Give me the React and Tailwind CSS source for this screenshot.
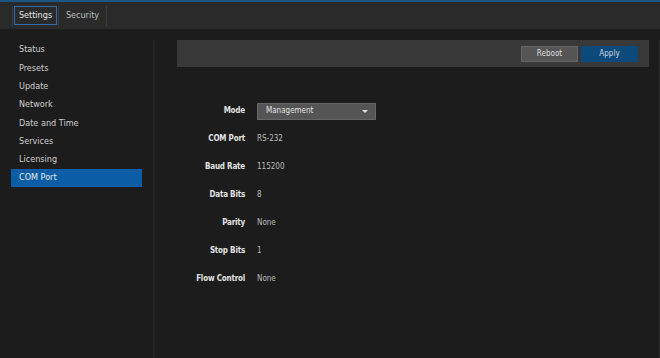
import { useState } from 'react';

const menu = ['Status', 'Presets', 'Update', 'Network', 'Date and Time', 'Services', 'Licensing', 'COM Port'];

const fields = [
  { label: 'COM Port', value: 'RS-232' },
  { label: 'Baud Rate', value: '115200' },
  { label: 'Data Bits', value: '8' },
  { label: 'Parity', value: 'None' },
  { label: 'Stop Bits', value: '1' },
  { label: 'Flow Control', value: 'None' },
];

const App = () => {
  const [active, setActive] = useState('COM Port');

  return (
    <div
      className="w-[660px] h-[358px] bg-[#1c1c1c] flex flex-col overflow-hidden text-[9px] text-[#d2d2d2]"
      style={{ fontFamily: '"DejaVu Sans Condensed", "DejaVu Sans", Verdana, sans-serif' }}
    >
      {/* Top tab bar */}
      <div className="h-[29px] bg-[#2a2a2a] border-t-2 border-[#1d5586] flex items-center pl-[12px]">
        <div className="w-px h-[20px] bg-[#3c3c3c]" />
        <div className="mx-[1px] h-[19px] w-[43px] flex items-center justify-center border border-[#2f6fa8] text-[#e6e6e6]">
          Settings
        </div>
        <div className="w-px h-[20px] bg-[#3c3c3c]" />
        <div className="h-[19px] w-[47px] flex items-center justify-center text-[#bdbdbd]">Security</div>
        <div className="w-px h-[20px] bg-[#3c3c3c]" />
      </div>

      <div className="flex flex-1 pt-[11px]">
        {/* Sidebar */}
        <div className="w-[155px] border-r-2 border-[#242424] px-[11px] pt-[1px] flex flex-col">
          {menu.map((item) => (
            <div
              key={item}
              onClick={() => setActive(item)}
              className={`h-[18.3px] flex items-center pl-[8px] cursor-pointer ${
                active === item ? 'bg-[#0b5ea6] text-[#e8e8e8]' : 'text-[#cfcfcf]'
              }`}
            >
              {item}
            </div>
          ))}
        </div>

        {/* Main */}
        <div className="flex-1 pl-[22px] pr-[10px] border-r border-[#2a2a2a]">
          <div className="h-[27px] bg-[#393939] flex items-center justify-end gap-[3px] pr-[11px]">
            <button className="w-[57px] h-[16px] bg-[#555555] border border-[#666] text-[#dedede] text-[8px]">
              Reboot
            </button>
            <button className="w-[57px] h-[16px] bg-[#0c4a7b] text-[#cfd8e0] text-[8px]">Apply</button>
          </div>

          <div className="mt-[30px] grid grid-cols-[68px_1fr] gap-x-[12px] auto-rows-[28px] items-center text-[8px]">
            <div className="text-right font-bold tracking-[-0.2px] text-[#e2e2e2]">Mode</div>
            <div>
              <div className="w-[119px] h-[17px] bg-[#555555] border border-[#666] flex items-center justify-between pl-[8px] pr-[7px] text-[#e0e0e0]">
                <span>Management</span>
                <span className="w-0 h-0 border-l-[3px] border-r-[3px] border-t-[3px] border-l-transparent border-r-transparent border-t-[#e0e0e0]" />
              </div>
            </div>
            {fields.map((f) => (
              <>
                <div key={f.label} className="text-right font-bold tracking-[-0.2px] text-[#e2e2e2] whitespace-nowrap">
                  {f.label}
                </div>
                <div key={f.label + 'v'} className="text-[#bdbdbd]">
                  {f.value}
                </div>
              </>
            ))}
          </div>
        </div>
      </div>
    </div>
  );
};

export default App;
